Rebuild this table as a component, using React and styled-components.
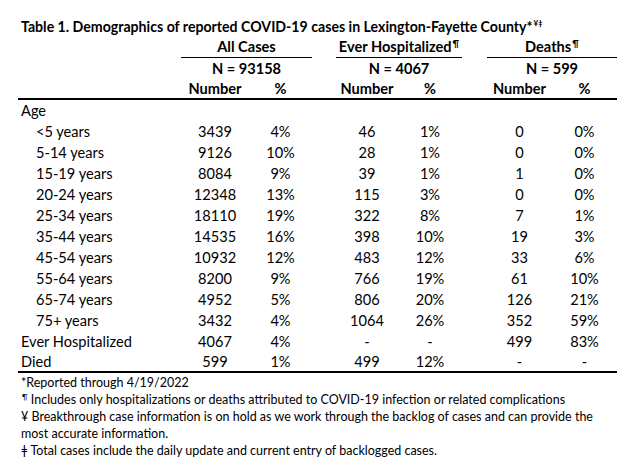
import React from 'react';
import styled, { createGlobalStyle } from 'styled-components';

const GlobalStyle = createGlobalStyle`
  html, body {
    margin: 0;
    padding: 0;
    background: #ffffff;
  }
  body {
    font-family: Lato, "Open Sans", "Liberation Sans", sans-serif;
    color: #000000;
  }
`;

const COLS = '163px 68px 63px 24px 62px 64px 25px 65px 65px';

const Page = styled.div`
  width: 633px;
  height: 468px;
  box-sizing: border-box;
  padding: 16px 0 0 18px;
  overflow: hidden;
`;

const Title = styled.div`
  font-weight: 700;
  font-size: 14.15px;
  line-height: 21px;
  padding-left: 3px;
  white-space: nowrap;
`;

const Sup = styled.sup`
  font-size: ${(p) => p.size || 9}px;
  line-height: 0;
  vertical-align: ${(p) => p.raise || 5}px;
  margin-left: 1px;
`;

const Table = styled.div`
  width: 599px;
  font-size: 14.6px;
`;

const Row = styled.div`
  display: grid;
  grid-template-columns: ${COLS};
  line-height: ${(p) => (p.rule ? 19 : 21)}px;
  border-bottom: ${(p) => (p.rule ? '2px solid #000' : 'none')};
  font-weight: ${(p) => (p.bold ? 700 : 400)};
`;

const Group = styled.div`
  grid-column: span 2;
  text-align: center;
  line-height: ${(p) => (p.underline ? 20 : 21)}px;
  border-bottom: ${(p) => (p.underline ? '1px solid #000' : 'none')};
  white-space: nowrap;
`;

const Label = styled.div`
  padding-left: ${(p) => (p.indent ? 18 : 3)}px;
  white-space: nowrap;
`;

const Cell = styled.div`
  text-align: center;
  white-space: nowrap;
`;

const Notes = styled.div`
  margin-top: 1px;
  padding-left: 3px;
  font-size: 12.5px;
  line-height: 17px;
`;

const Note = styled.div`
  white-space: nowrap;
`;

const rows = [
  ['<5 years', '3439', '4%', '46', '1%', '0', '0%'],
  ['5-14 years', '9126', '10%', '28', '1%', '0', '0%'],
  ['15-19 years', '8084', '9%', '39', '1%', '1', '0%'],
  ['20-24 years', '12348', '13%', '115', '3%', '0', '0%'],
  ['25-34 years', '18110', '19%', '322', '8%', '7', '1%'],
  ['35-44 years', '14535', '16%', '398', '10%', '19', '3%'],
  ['45-54 years', '10932', '12%', '483', '12%', '33', '6%'],
  ['55-64 years', '8200', '9%', '766', '19%', '61', '10%'],
  ['65-74 years', '4952', '5%', '806', '20%', '126', '21%'],
  ['75+ years', '3432', '4%', '1064', '26%', '352', '59%'],
];

const totals = [
  ['Ever Hospitalized', '4067', '4%', '-', '-', '499', '83%'],
  ['Died', '599', '1%', '499', '12%', '-', '-'],
];

function DataRow({ values, indent, rule }) {
  const [label, a, ap, h, hp, d, dp] = values;
  return (
    <Row rule={rule}>
      <Label indent={indent}>{label}</Label>
      <Cell>{a}</Cell>
      <Cell>{ap}</Cell>
      <div />
      <Cell>{h}</Cell>
      <Cell>{hp}</Cell>
      <div />
      <Cell>{d}</Cell>
      <Cell>{dp}</Cell>
    </Row>
  );
}

export default function App() {
  return (
    <Page>
      <GlobalStyle />
      <Title>
        Table 1. Demographics of reported COVID-19 cases in Lexington-Fayette County*
        <Sup size={8} raise={6}>¥ǂ</Sup>
      </Title>
      <Table>
        <Row bold>
          <div />
          <Group underline>All Cases</Group>
          <div />
          <Group underline>
            Ever Hospitalized<Sup>¶</Sup>
          </Group>
          <div />
          <Group underline>
            Deaths<Sup>¶</Sup>
          </Group>
        </Row>
        <Row bold>
          <div />
          <Group>N = 93158</Group>
          <div />
          <Group>N = 4067</Group>
          <div />
          <Group>N = 599</Group>
        </Row>
        <Row bold rule>
          <div />
          <Cell>Number</Cell>
          <Cell>%</Cell>
          <div />
          <Cell>Number</Cell>
          <Cell>%</Cell>
          <div />
          <Cell>Number</Cell>
          <Cell>%</Cell>
        </Row>
        <Row>
          <Label>Age</Label>
        </Row>
        {rows.map((r) => (
          <DataRow key={r[0]} values={r} indent />
        ))}
        <DataRow values={totals[0]} />
        <DataRow values={totals[1]} rule />
      </Table>
      <Notes>
        <Note>*Reported through 4/19/2022</Note>
        <Note>
          <Sup size={8} raise={4}>¶</Sup> Includes only hospitalizations or deaths attributed to COVID-19 infection or related complications
        </Note>
        <Note>¥ Breakthrough case information is on hold as we work through the backlog of cases and can provide the</Note>
        <Note>most accurate information.</Note>
        <Note>ǂ Total cases include the daily update and current entry of backlogged cases.</Note>
      </Notes>
    </Page>
  );
}
